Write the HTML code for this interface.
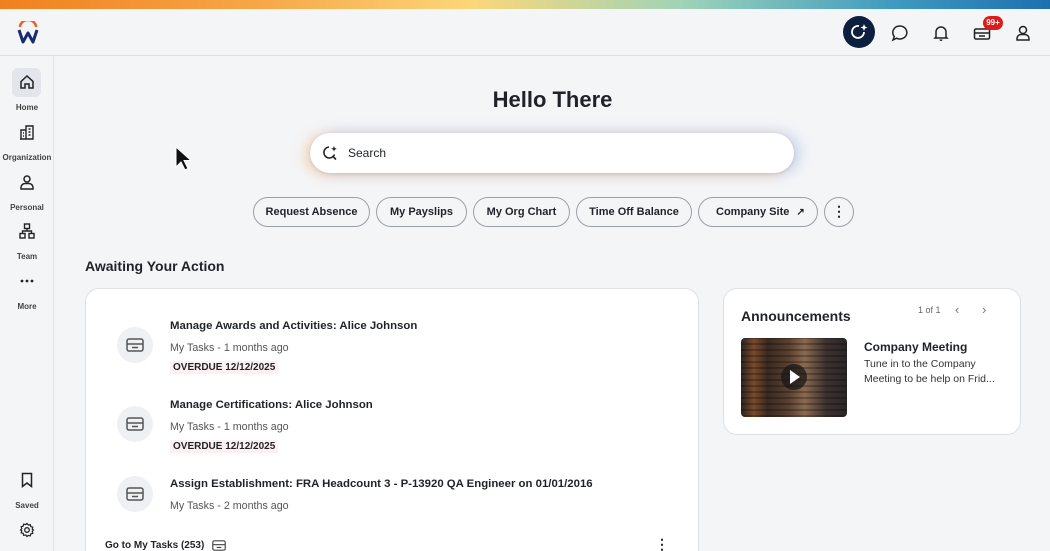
<!DOCTYPE html>
<html><head><meta charset="utf-8"><style>
*{box-sizing:border-box;margin:0;padding:0}
html,body{width:1050px;height:551px;overflow:hidden}
body{background:#f4f5f7;font-family:"Liberation Sans",sans-serif;color:#1f2329;position:relative}
.top{position:absolute;left:0;top:0;width:1050px;height:9px;background:linear-gradient(90deg,#f0801e 0%,#f7a748 25%,#fbd77a 45%,#9fd3b8 65%,#3f9bbf 85%,#1e6fb0 100%)}
.hdr{position:absolute;left:0;top:9px;width:1050px;height:47px;border-bottom:1px solid #dfe2e6;background:#f4f5f7}
.side{position:absolute;left:0;top:56px;width:54px;height:495px;border-right:1px solid #dfe2e6}
.nav{position:absolute;left:0;width:54px;text-align:center;font-size:8px;font-weight:bold;color:#444}
.nav svg{display:block;margin:0 auto}
.nav div{margin-top:13px}
.abs{position:absolute}
.pill{position:absolute;top:197px;height:30px;border:1px solid #9aa0a8;border-radius:15px;font-size:11px;font-weight:bold;text-align:center;line-height:28px;background:#f4f5f7}
.card{position:absolute;background:#fff;border:1px solid #dde0e4;border-radius:14px}
.ic{position:absolute;left:117px;width:36px;height:36px;border-radius:50%;background:#eef0f3}
.t{position:absolute;left:170px;font-size:11.4px;font-weight:bold}
.s{position:absolute;left:170px;font-size:10.7px;color:#555}
.o{position:absolute;left:170px;font-size:10px;font-weight:bold;background:#fdf0f0;padding:1px 3px}
</style></head><body>
<div class="top"></div>
<div class="hdr">
 <svg class="abs" style="left:17px;top:12px" width="22" height="24" viewBox="0 0 22 24"><path d="M3 6 A8 7 0 0 1 19 6" fill="none" stroke="#f0601e" stroke-width="2.5"/><path d="M2 9 L6 21 L11 12 L16 21 L20 9" fill="none" stroke="#1a2a6e" stroke-width="3" stroke-linejoin="round"/></svg>
 <div class="abs" style="left:843px;top:7px;width:32px;height:32px;border-radius:50%;background:#0c1f3f"></div>
 <svg class="abs" style="left:850px;top:14px" width="18" height="18" viewBox="0 0 18 18"><path d="M14 9 A6 6 0 1 1 9 3" fill="none" stroke="#fff" stroke-width="1.8"/><path d="M14 1 l1 2.5 2.5 1 -2.5 1 -1 2.5 -1-2.5 -2.5-1 2.5-1z" fill="#fff"/></svg>
 <svg class="abs" style="left:891px;top:15px" width="18" height="18" viewBox="0 0 18 18"><path d="M9 2a7 6.5 0 1 1-3.5 12.2L2 16l1.3-3.5A7 6.5 0 0 1 9 2z" fill="none" stroke="#222" stroke-width="1.5"/></svg>
 <svg class="abs" style="left:933px;top:15px" width="16" height="18" viewBox="0 0 16 18"><path d="M3 13V8a5 5 0 0 1 10 0v5l1 1H2z" fill="none" stroke="#222" stroke-width="1.5"/><path d="M6.5 15.5a1.5 1.5 0 0 0 3 0" fill="#222"/></svg>
 <svg class="abs" style="left:973px;top:16px" width="18" height="16" viewBox="0 0 18 16"><rect x="1.5" y="4" width="15" height="10" rx="1.5" fill="none" stroke="#222" stroke-width="1.5"/><path d="M1.5 8h15M6 11h6" stroke="#222" stroke-width="1.5"/></svg>
 <div class="abs" style="left:983px;top:7px;width:20px;height:14px;border-radius:7px;background:#de1b1b;color:#fff;font-size:8px;font-weight:bold;text-align:center;line-height:14px">99+</div>
 <svg class="abs" style="left:1015px;top:15px" width="16" height="18" viewBox="0 0 16 18"><circle cx="8" cy="6" r="3.5" fill="none" stroke="#222" stroke-width="1.5"/><path d="M2 16v-1.5a4 4 0 0 1 4-4h4a4 4 0 0 1 4 4V16z" fill="none" stroke="#222" stroke-width="1.5"/></svg>
</div>
<div class="side">
 <div class="abs" style="left:12px;top:12px;width:29px;height:29px;border-radius:6px;background:#e2e5ea"></div>
 <div class="nav" style="top:18px"><svg width="16" height="16" viewBox="0 0 16 16"><path d="M2 7.5L8 2l6 5.5V14H10V10H6v4H2z" fill="none" stroke="#222" stroke-width="1.5"/></svg><div>Home</div></div>
 <div class="nav" style="top:68px"><svg width="16" height="16" viewBox="0 0 16 16"><path d="M2 15V6h5V15M7 15V2h7v13H1M9.5 5h2M9.5 8h2M9.5 11h2M4 9h1M4 12h1" fill="none" stroke="#222" stroke-width="1.4"/></svg><div>Organization</div></div>
 <div class="nav" style="top:118px"><svg width="16" height="16" viewBox="0 0 16 16"><circle cx="8" cy="5" r="3" fill="none" stroke="#222" stroke-width="1.5"/><path d="M2 15v-1.5a4 4 0 0 1 4-4h4a4 4 0 0 1 4 4V15z" fill="none" stroke="#222" stroke-width="1.5"/></svg><div>Personal</div></div>
 <div class="nav" style="top:167px"><svg width="16" height="16" viewBox="0 0 16 16"><rect x="5.5" y="1" width="5" height="4.5" fill="none" stroke="#222" stroke-width="1.4"/><rect x="1" y="10.5" width="5" height="4.5" fill="none" stroke="#222" stroke-width="1.4"/><rect x="10" y="10.5" width="5" height="4.5" fill="none" stroke="#222" stroke-width="1.4"/><path d="M8 5.5v2.5M3.5 10.5V8h9v2.5" fill="none" stroke="#222" stroke-width="1.4"/></svg><div>Team</div></div>
 <div class="nav" style="top:217px"><svg width="16" height="16" viewBox="0 0 16 16"><circle cx="3" cy="8" r="1.4" fill="#222"/><circle cx="8" cy="8" r="1.4" fill="#222"/><circle cx="13" cy="8" r="1.4" fill="#222"/></svg><div>More</div></div>
 <div class="nav" style="top:416px"><svg width="16" height="16" viewBox="0 0 16 16"><path d="M3.5 1.5h9v13L8 11l-4.5 3.5z" fill="none" stroke="#222" stroke-width="1.5"/></svg><div>Saved</div></div>
 <div class="nav" style="top:466px"><svg width="16" height="16" viewBox="0 0 16 16"><circle cx="8" cy="8" r="2.3" fill="none" stroke="#222" stroke-width="1.3"/><path d="M8 1.5l1.3 1.6 2-.5.5 2 2 .6-.6 2L14.5 8l-1.3 1.3.6 2-2 .6-.5 2-2-.5L8 14.5l-1.3-1.6-2 .5-.5-2-2-.6.6-2L1.5 8l1.3-1.3-.6-2 2-.6.5-2 2 .5z" fill="none" stroke="#222" stroke-width="1.2"/></svg></div>
</div>
<svg class="abs" style="left:175px;top:146px" width="16" height="26" viewBox="0 0 16 26"><path d="M1 1v20l5-5 4 8 3-1.5-4-8h7z" fill="#111" stroke="#fff" stroke-width="1"/></svg>
<div class="abs" style="left:0;top:87px;width:1105px;text-align:center;font-size:22px;font-weight:bold">Hello There</div>
<div class="abs" style="left:310px;top:133px;width:484px;height:40px;border-radius:20px;background:#fff;box-shadow:-6px 2px 12px rgba(245,160,90,.35),6px 0 14px rgba(130,170,225,.4),0 1px 3px rgba(0,0,0,.15)"></div>
<svg class="abs" style="left:322px;top:145px" width="16" height="16" viewBox="0 0 16 16"><path d="M12.5 9.5A5.5 5.5 0 1 1 7 2" fill="none" stroke="#222" stroke-width="1.6"/><path d="M10.5 11l3.5 3.5" stroke="#222" stroke-width="1.6"/><path d="M12 1l.8 2 2 .8-2 .8-.8 2-.8-2-2-.8 2-.8z" fill="#222"/></svg>
<div class="abs" style="left:348px;top:146px;font-size:12px">Search</div>
<div class="pill" style="left:253px;width:117px">Request Absence</div>
<div class="pill" style="left:376px;width:91px">My Payslips</div>
<div class="pill" style="left:473px;width:97px">My Org Chart</div>
<div class="pill" style="left:576px;width:116px">Time Off Balance</div>
<div class="pill" style="left:698px;width:120px;text-align:left;padding-left:17px">Company Site <span style="font-size:10px;margin-left:4px">&#8599;</span></div>
<div class="pill" style="left:824px;width:30px;font-size:14px;line-height:26px">&#8942;</div>
<div class="abs" style="left:85px;top:258px;font-size:14px;font-weight:bold">Awaiting Your Action</div>
<div class="card" style="left:85px;top:288px;width:614px;height:280px"></div>
<div class="ic" style="top:327px"></div><div class="ic" style="top:406px"></div><div class="ic" style="top:476px"></div>
<svg class="abs" style="left:126px;top:338px" width="18" height="14" viewBox="0 0 18 14"><rect x="1" y="1" width="16" height="12" rx="2" fill="none" stroke="#555" stroke-width="1.5"/><path d="M1 6h16M6 9.5h6" stroke="#555" stroke-width="1.5"/></svg>
<svg class="abs" style="left:126px;top:417px" width="18" height="14" viewBox="0 0 18 14"><rect x="1" y="1" width="16" height="12" rx="2" fill="none" stroke="#555" stroke-width="1.5"/><path d="M1 6h16M6 9.5h6" stroke="#555" stroke-width="1.5"/></svg>
<svg class="abs" style="left:126px;top:487px" width="18" height="14" viewBox="0 0 18 14"><rect x="1" y="1" width="16" height="12" rx="2" fill="none" stroke="#555" stroke-width="1.5"/><path d="M1 6h16M6 9.5h6" stroke="#555" stroke-width="1.5"/></svg>
<div class="t" style="top:320px">Manage Awards and Activities: Alice Johnson</div>
<div class="s" style="top:342px">My Tasks - 1 months ago</div>
<div class="o" style="top:361px">OVERDUE 12/12/2025</div>
<div class="t" style="top:399px">Manage Certifications: Alice Johnson</div>
<div class="s" style="top:421px">My Tasks - 1 months ago</div>
<div class="o" style="top:440px">OVERDUE 12/12/2025</div>
<div class="t" style="top:478px">Assign Establishment: FRA Headcount 3 - P-13920 QA Engineer on 01/01/2016</div>
<div class="s" style="top:500px">My Tasks - 2 months ago</div>
<div class="abs" style="left:105px;top:540px;font-size:10px;font-weight:bold">Go to My Tasks (253)</div>
<svg class="abs" style="left:212px;top:540px" width="14" height="11" viewBox="0 0 18 14"><rect x="1" y="1" width="16" height="12" rx="2" fill="none" stroke="#444" stroke-width="1.5"/><path d="M1 6h16M6 9.5h6" stroke="#444" stroke-width="1.5"/></svg>
<div class="abs" style="left:655px;top:536px;font-size:14px;font-weight:bold">&#8942;</div>
<div class="card" style="left:723px;top:288px;width:298px;height:147px"></div>
<div class="abs" style="left:741px;top:308px;font-size:14px;font-weight:bold">Announcements</div>
<div class="abs" style="left:918px;top:305px;font-size:9px;color:#666">1 of 1</div>
<div class="abs" style="left:955px;top:302px;font-size:13px;color:#777">&#8249;</div>
<div class="abs" style="left:982px;top:302px;font-size:13px;color:#777">&#8250;</div>
<div class="abs" style="left:741px;top:338px;width:106px;height:79px;border-radius:4px;background:repeating-linear-gradient(0deg,rgba(0,0,0,.25) 0 2px,transparent 2px 6px),linear-gradient(90deg,#2a2422 0%,#7a4a2a 12%,#3a2a22 25%,#5a4030 45%,#8a6a50 60%,#3d3230 80%,#2a2626 100%)"></div>
<div class="abs" style="left:781px;top:364px;width:26px;height:26px;border-radius:50%;background:rgba(20,20,20,.7)"></div>
<div class="abs" style="left:790px;top:370px;width:0;height:0;border-left:10px solid #fff;border-top:7px solid transparent;border-bottom:7px solid transparent"></div>
<div class="abs" style="left:864px;top:340px;font-size:12px;font-weight:bold">Company Meeting</div>
<div class="abs" style="left:864px;top:357px;font-size:10.5px;color:#333;line-height:15px">Tune in to the Company<br>Meeting to be help on Frid...</div>
</body></html>
